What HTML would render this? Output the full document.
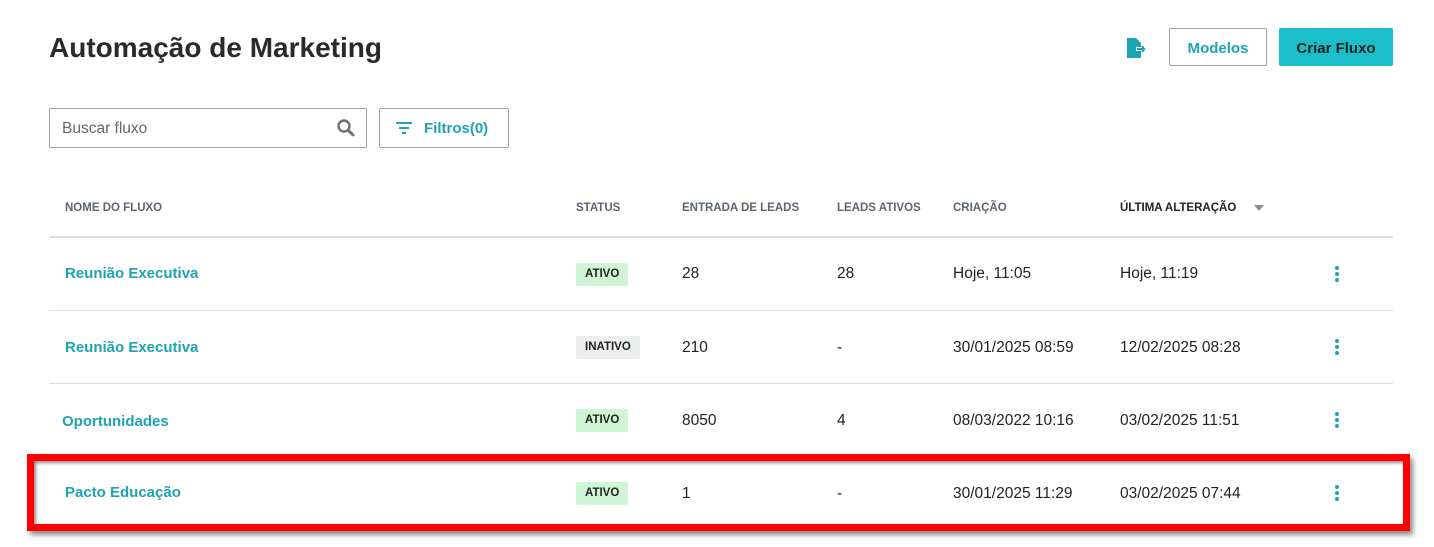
<!DOCTYPE html>
<html><head><style>
body{margin:0;width:1434px;height:547px;background:#fff;font-family:"Liberation Sans",sans-serif;position:relative;overflow:hidden;color:#222}
.a{position:absolute;white-space:nowrap}
h1{position:absolute;left:49px;top:32px;margin:0;font-size:28px;font-weight:bold;color:#2a2a2a}
.btn{position:absolute;height:38px;border-radius:2px;font-size:15px;font-weight:bold;display:flex;align-items:center;justify-content:center;box-sizing:border-box}
.th{position:absolute;top:202px;font-size:11.5px;font-weight:bold;color:#5d6670}
.line{position:absolute;left:49px;width:1344px;height:1px;background:#dcdfe2}
.name{position:absolute;font-size:15px;font-weight:bold;color:#1ea3b3}
.c{position:absolute;font-size:15.5px;color:#222}
.tag{position:absolute;left:576px;height:23px;padding:0 9px;font-size:11.5px;font-weight:bold;line-height:23px;border-radius:2px}
.on{background:#cff5d4;color:#222}.off{background:#eceeef;color:#222}
.dots{position:absolute;left:1335px;width:4px}
.dots i{display:block;width:4px;height:4px;border-radius:2px;background:#1ea3b3;margin-bottom:2px}
</style></head><body>
<h1>Automação de Marketing</h1>
<svg class="a" style="left:1127px;top:38px" width="22" height="20" viewBox="0 0 22 20"><path d="M0 0h9l5 5v4H9v4h5v7H0z" fill="#1ea3b3"/><path d="M10 11h7l-2-3M17 11l-2 3" stroke="#1ea3b3" stroke-width="2" fill="none"/></svg>
<div class="btn" style="left:1169px;top:28px;width:98px;border:1px solid #9aa1a8;color:#1ea3b3;background:#fff;padding-top:2px">Modelos</div>
<div class="btn" style="left:1279px;top:28px;width:114px;background:#1bbfcc;color:#222;padding-top:2px">Criar Fluxo</div>
<div class="a" style="left:49px;top:108px;width:318px;height:40px;border:1px solid #9aa1a8;box-sizing:border-box;border-radius:2px"></div>
<div class="a" style="left:62px;top:120px;font-size:15.5px;color:#666">Buscar fluxo</div>
<svg class="a" style="left:337px;top:119px" width="18" height="18" viewBox="0 0 18 18"><circle cx="7" cy="7" r="5.5" stroke="#6b7278" stroke-width="2.4" fill="none"/><path d="M11 11l5 5" stroke="#6b7278" stroke-width="3" stroke-linecap="round"/></svg>
<div class="a" style="left:379px;top:108px;width:130px;height:40px;border:1px solid #9aa1a8;box-sizing:border-box;border-radius:2px"></div>
<svg class="a" style="left:396px;top:121px" width="16" height="14"><path d="M0 2h16M3 7h10M6 12h4" stroke="#1ea3b3" stroke-width="2"/></svg>
<div class="a" style="left:424px;top:120px;font-size:15px;font-weight:bold;color:#1ea3b3">Filtros(0)</div>
<div class="th" style="left:65px">NOME DO FLUXO</div>
<div class="th" style="left:576px">STATUS</div>
<div class="th" style="left:682px">ENTRADA DE LEADS</div>
<div class="th" style="left:837px">LEADS ATIVOS</div>
<div class="th" style="left:953px">CRIAÇÃO</div>
<div class="th" style="left:1120px;color:#222">ÚLTIMA ALTERAÇÃO</div>
<svg class="a" style="left:1254px;top:205px" width="10" height="6"><path d="M0 0h10L5 6z" fill="#8a9096"/></svg>
<div class="line" style="top:236px;height:2px"></div>
<div class="line" style="top:310px"></div>
<div class="line" style="top:383px"></div>
<div class="line" style="top:456px"></div>

<div class="name" style="left:65px;top:265px">Reunião Executiva</div>
<div class="tag on" style="top:263px">ATIVO</div>
<div class="c" style="left:682px;top:265px">28</div><div class="c" style="left:837px;top:265px">28</div>
<div class="c" style="left:953px;top:265px">Hoje, 11:05</div><div class="c" style="left:1120px;top:265px">Hoje, 11:19</div>
<div class="dots" style="top:266px"><i></i><i></i><i></i></div>

<div class="name" style="left:65px;top:339px">Reunião Executiva</div>
<div class="tag off" style="top:336px">INATIVO</div>
<div class="c" style="left:682px;top:339px">210</div><div class="c" style="left:837px;top:339px">-</div>
<div class="c" style="left:953px;top:339px">30/01/2025 08:59</div><div class="c" style="left:1120px;top:339px">12/02/2025 08:28</div>
<div class="dots" style="top:339px"><i></i><i></i><i></i></div>

<div class="name" style="left:62px;top:413px">Oportunidades</div>
<div class="tag on" style="top:409px">ATIVO</div>
<div class="c" style="left:682px;top:412px">8050</div><div class="c" style="left:837px;top:412px">4</div>
<div class="c" style="left:953px;top:412px">08/03/2022 10:16</div><div class="c" style="left:1120px;top:412px">03/02/2025 11:51</div>
<div class="dots" style="top:412px"><i></i><i></i><i></i></div>

<div class="a" style="left:27px;top:454px;width:1383px;height:77px;border:7px solid #ff0000;box-sizing:border-box;box-shadow:3px 4px 5px rgba(0,0,0,.45),inset 2px 2px 3px rgba(0,0,0,.45)"></div>
<div class="name" style="left:65px;top:484px">Pacto Educação</div>
<div class="tag on" style="top:482px">ATIVO</div>
<div class="c" style="left:682px;top:485px">1</div><div class="c" style="left:837px;top:485px">-</div>
<div class="c" style="left:953px;top:485px">30/01/2025 11:29</div><div class="c" style="left:1120px;top:485px">03/02/2025 07:44</div>
<div class="dots" style="top:485px"><i></i><i></i><i></i></div>
</body></html>
